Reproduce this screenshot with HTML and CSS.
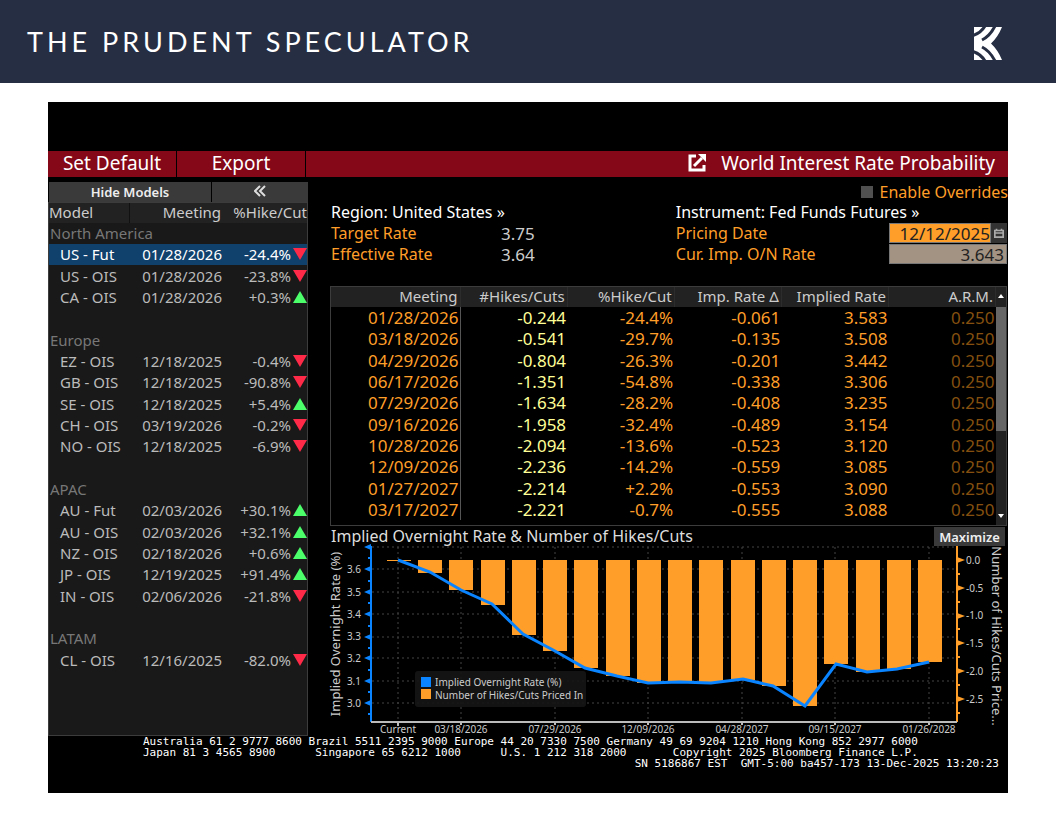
FILE: index.html
```html
<!DOCTYPE html>
<html lang="en">
<head>
  <meta charset="UTF-8" />
  <meta name="viewport" content="width=device-width, initial-scale=1.0"/>
  <title>The Prudent Speculator - World Interest Rate Probability</title>
  <link rel="stylesheet" href="styles.css">
</head>
<body>
  <header class="site-header">
    <h1>THE PRUDENT SPECULATOR</h1>
    <svg class="logo" viewBox="0 0 28 33" aria-hidden="true">
      <path class="logo-shape" d="M0 0H28Q24 10 17 16.500Q24 23 28 33H0Z"/>
      <path class="logo-cut" d="M11 -1Q7 6 -1 8.500M21 -1Q16 9 8 13M11 34Q7 27 -1 24.500M21 34Q16 24 8 20"/>
    </svg>
  </header>

  <main class="terminal">
    <nav class="menu-bar">
      <button type="button" class="menu-btn">Set Default</button>
      <button type="button" class="menu-btn">Export</button>
      <div class="menu-title">
        <svg class="popout" viewBox="0 0 18 18" aria-hidden="true">
          <path d="M8 2H2V16H16V11" fill="none" stroke="#fff" stroke-width="3"/>
          <path d="M6 12L14 4" stroke="#fff" stroke-width="3"/>
          <path d="M10 0H18V8Z" fill="#fff"/>
        </svg>
        <h2>World Interest Rate Probability</h2>
      </div>
    </nav>

    <div class="content">
      <aside class="models">
        <div class="models-bar">
          <button type="button" class="gray-btn">Hide Models</button>
          <button type="button" class="gray-btn" aria-label="Collapse">
            <svg class="chevrons" viewBox="0 0 12 12" aria-hidden="true">
              <path d="M6 1L1 6L6 11M11 1L6 6L11 11" fill="none" stroke="#ddd" stroke-width="2"/>
            </svg>
          </button>
        </div>
        <div class="models-panel">
          <table class="models-table">
            <thead>
              <tr><th class="col-model">Model</th><th class="col-date">Meeting</th><th class="col-cut">%Hike/Cut</th></tr>
            </thead>
            <tbody>
              <tr class="group"><td colspan="3">North America</td></tr>
              <tr class="selected"><td>US - Fut</td><td>01/28/2026</td><td>-24.4%<i class="down"></i></td></tr>
              <tr><td>US - OIS</td><td>01/28/2026</td><td>-23.8%<i class="down"></i></td></tr>
              <tr><td>CA - OIS</td><td>01/28/2026</td><td>+0.3%<i class="up"></i></td></tr>
              <tr class="group"><td colspan="3"></td></tr>
              <tr class="group"><td colspan="3">Europe</td></tr>
              <tr><td>EZ - OIS</td><td>12/18/2025</td><td>-0.4%<i class="down"></i></td></tr>
              <tr><td>GB - OIS</td><td>12/18/2025</td><td>-90.8%<i class="down"></i></td></tr>
              <tr><td>SE - OIS</td><td>12/18/2025</td><td>+5.4%<i class="up"></i></td></tr>
              <tr><td>CH - OIS</td><td>03/19/2026</td><td>-0.2%<i class="down"></i></td></tr>
              <tr><td>NO - OIS</td><td>12/18/2025</td><td>-6.9%<i class="down"></i></td></tr>
              <tr class="group"><td colspan="3"></td></tr>
              <tr class="group"><td colspan="3">APAC</td></tr>
              <tr><td>AU - Fut</td><td>02/03/2026</td><td>+30.1%<i class="up"></i></td></tr>
              <tr><td>AU - OIS</td><td>02/03/2026</td><td>+32.1%<i class="up"></i></td></tr>
              <tr><td>NZ - OIS</td><td>02/18/2026</td><td>+0.6%<i class="up"></i></td></tr>
              <tr><td>JP - OIS</td><td>12/19/2025</td><td>+91.4%<i class="up"></i></td></tr>
              <tr><td>IN - OIS</td><td>02/06/2026</td><td>-21.8%<i class="down"></i></td></tr>
              <tr class="group"><td colspan="3"></td></tr>
              <tr class="group"><td colspan="3">LATAM</td></tr>
              <tr><td>CL - OIS</td><td>12/16/2025</td><td>-82.0%<i class="down"></i></td></tr>
            </tbody>
          </table>
        </div>
      </aside>

      <section class="detail">
        <div class="overrides">
          <input type="checkbox" id="overrides" />
          <label for="overrides">Enable Overrides</label>
        </div>

        <div class="info">
          <div class="info-region">
            <a href="#" class="info-link">Region: United States »</a>
            <span>Target Rate</span><span class="info-value">3.75</span>
            <span>Effective Rate</span><span class="info-value">3.64</span>
          </div>
          <div class="info-instrument">
            <a href="#" class="info-link">Instrument: Fed Funds Futures »</a>
            <label for="pricing_date">Pricing Date</label>
            <div class="date-field">
              <input type="text" id="pricing_date" value="12/12/2025" />
              <button type="button" class="calendar-btn" aria-label="Open calendar">
                <svg viewBox="0 0 12 12" aria-hidden="true">
                  <path d="M1 3H11V11H1ZM1 6H11M3 1V4M9 1V4" fill="none" stroke="#aaa" stroke-width="2"/>
                </svg>
              </button>
            </div>
            <label for="on_rate">Cur. Imp. O/N Rate</label>
            <input type="text" id="on_rate" value="3.643" readonly />
          </div>
        </div>

        <div class="rates">
          <table class="rates-table">
            <thead>
              <tr>
                <th class="col-meeting">Meeting</th><th>#Hikes/Cuts</th><th>%Hike/Cut</th><th>Imp. Rate Δ</th><th>Implied Rate</th><th>A.R.M.</th>
              </tr>
            </thead>
            <tbody>
              <tr><td>01/28/2026</td><td>-0.244</td><td>-24.4%</td><td>-0.061</td><td>3.583</td><td>0.250</td></tr>
              <tr><td>03/18/2026</td><td>-0.541</td><td>-29.7%</td><td>-0.135</td><td>3.508</td><td>0.250</td></tr>
              <tr><td>04/29/2026</td><td>-0.804</td><td>-26.3%</td><td>-0.201</td><td>3.442</td><td>0.250</td></tr>
              <tr><td>06/17/2026</td><td>-1.351</td><td>-54.8%</td><td>-0.338</td><td>3.306</td><td>0.250</td></tr>
              <tr><td>07/29/2026</td><td>-1.634</td><td>-28.2%</td><td>-0.408</td><td>3.235</td><td>0.250</td></tr>
              <tr><td>09/16/2026</td><td>-1.958</td><td>-32.4%</td><td>-0.489</td><td>3.154</td><td>0.250</td></tr>
              <tr><td>10/28/2026</td><td>-2.094</td><td>-13.6%</td><td>-0.523</td><td>3.120</td><td>0.250</td></tr>
              <tr><td>12/09/2026</td><td>-2.236</td><td>-14.2%</td><td>-0.559</td><td>3.085</td><td>0.250</td></tr>
              <tr><td>01/27/2027</td><td>-2.214</td><td>+2.2%</td><td>-0.553</td><td>3.090</td><td>0.250</td></tr>
              <tr><td>03/17/2027</td><td>-2.221</td><td>-0.7%</td><td>-0.555</td><td>3.088</td><td>0.250</td></tr>
            </tbody>
          </table>
          <div class="scrollbar">
            <span class="arrow-up"></span>
            <span class="track"><span class="thumb"></span></span>
            <span class="arrow-down"></span>
          </div>
        </div>

        <div class="chart-head">
          <h3>Implied Overnight Rate &amp; Number of Hikes/Cuts</h3>
          <button type="button" class="gray-btn">Maximize</button>
        </div>

        <svg class="chart" viewBox="0 0 678 190" role="img" aria-label="Implied overnight rate and number of hikes/cuts">
          <!-- grid -->
          <path class="grid" d="M42 1H626M42 23H626M42 46H626M42 68H626M42 91H626M42 112H626M42 135H626M42 157H626"/>
          <path class="grid" d="M68 1V176M131 1V176M225 1V176M318 1V176M412 1V176M505 1V176M599 1V176"/>

          <!-- hikes/cuts priced in -->
          <g class="bars">
            <rect x="57" y="14" width="24" height="1"/>
            <rect x="88" y="14" width="24" height="13"/>
            <rect x="119" y="14" width="24" height="30"/>
            <rect x="151" y="14" width="24" height="45"/>
            <rect x="182" y="14" width="24" height="75"/>
            <rect x="213" y="14" width="24" height="91"/>
            <rect x="244" y="14" width="24" height="108"/>
            <rect x="276" y="14" width="24" height="116"/>
            <rect x="307" y="14" width="24" height="123"/>
            <rect x="338" y="14" width="24" height="122"/>
            <rect x="369" y="14" width="24" height="122"/>
            <rect x="401" y="14" width="24" height="120"/>
            <rect x="432" y="14" width="24" height="126"/>
            <rect x="463" y="14" width="24" height="146"/>
            <rect x="494" y="14" width="24" height="104"/>
            <rect x="526" y="14" width="24" height="112"/>
            <rect x="557" y="14" width="24" height="109"/>
            <rect x="588" y="14" width="24" height="102"/>
          </g>

          <!-- legend -->
          <rect class="legend-box" x="85" y="125" width="171" height="36" rx="3"/>
          <rect class="legend-rate" x="91" y="131" width="10" height="10"/>
          <rect class="legend-cuts" x="91" y="143" width="10" height="10"/>
          <text class="legend-text" x="105" y="140">Implied Overnight Rate (%)</text>
          <text class="legend-text" x="105" y="153">Number of Hikes/Cuts Priced In</text>

          <polyline class="rate-line" points="68,14 100,26 131,44 162,58 193,88 225,105 255,122 287,130 318,137 350,136 381,137 413,133 443,140 475,160 506,118 537,126 567,123 599,116"/>

          <!-- axes -->
          <path class="axis-left" d="M41 0V176M38 12H41M38 35H41M38 57H41M38 80H41M38 102H41M38 124H41M38 146H41M38 168H41"/>
          <path class="ticks-left" d="M41 -2V4L34 1ZM41 20V26L34 23ZM41 43V49L34 46ZM41 65V71L34 68ZM41 88V94L34 91ZM41 109V115L34 112ZM41 132V138L34 135ZM41 154V160L34 157Z"/>
          <path class="axis-right" d="M627 0V176M627 28H630M627 56H630M627 83H630M627 111H630M627 139H630M627 167H630"/>
          <path class="ticks-right" d="M627 11V17L635 14ZM627 39V45L635 42ZM627 67V73L635 70ZM627 94V100L635 97ZM627 122V128L635 125ZM627 150V156L635 153Z"/>
          <path class="axis-bottom" d="M41 176H627M68 176V180M131 176V179M225 176V179M318 176V179M412 176V179M505 176V179M599 176V179"/>

          <g class="labels labels-left">
            <text x="31" y="27">3.6</text>
            <text x="31" y="50">3.5</text>
            <text x="31" y="72">3.4</text>
            <text x="31" y="94">3.3</text>
            <text x="31" y="116">3.2</text>
            <text x="31" y="139">3.1</text>
            <text x="31" y="161">3.0</text>
          </g>
          <g class="labels">
            <text x="636" y="18">0.0</text>
            <text x="636" y="46">-0.5</text>
            <text x="636" y="73">-1.0</text>
            <text x="636" y="101">-1.5</text>
            <text x="636" y="129">-2.0</text>
            <text x="636" y="157">-2.5</text>
          </g>
          <g class="labels labels-bottom">
            <text x="68" y="187">Current</text>
            <text x="131" y="187">03/18/2026</text>
            <text x="225" y="187">07/29/2026</text>
            <text x="318" y="187">12/09/2026</text>
            <text x="412" y="187">04/28/2027</text>
            <text x="505" y="187">09/15/2027</text>
            <text x="599" y="187">01/26/2028</text>
          </g>
          <text class="axis-title" transform="translate(10 88) rotate(-90)">Implied Overnight Rate (%)</text>
          <text class="axis-title" transform="translate(662 90) rotate(90)">Number of Hikes/Cuts Price...</text>
        </svg>
      </section>
    </div>

    <footer class="terminal-footer">
      <pre>Australia 61 2 9777 8600 Brazil 5511 2395 9000 Europe 44 20 7330 7500 Germany 49 69 9204 1210 Hong Kong 852 2977 6000
Japan 81 3 4565 8900      Singapore 65 6212 1000      U.S. 1 212 318 2000       Copyright 2025 Bloomberg Finance L.P.</pre>
      <pre class="session">SN 5186867 EST  GMT-5:00 ba457-173 13-Dec-2025 13:20:23</pre>
    </footer>
  </main>
</body>
</html>
```

FILE: styles.css
```css
:root {
  --navy: #262e43;
  --red: #840818;
  --orange: #ff9e28;
  --blue: #0a84ff;
  --panel: #191919;
  --line: #3c3c3c;
}

* {
  margin: 0;
  padding: 0;
  box-sizing: border-box;
}

body {
  background-color: #fff;
  color: #fff;
  font-family: "Noto Sans", sans-serif;
  font-size: 16px;
}

button, input {
  font: inherit;
  color: inherit;
  border: none;
}

table {
  border-collapse: collapse;
  table-layout: fixed;
  width: 100%;
}

th {
  font-weight: 400;
}

.site-header {
  display: flex;
  align-items: center;
  justify-content: space-between;
  height: 83px;
  padding: 0 54px 0 27px;
  background-color: var(--navy);
}

h1 {
  font-family: Lato, sans-serif;
  font-size: 27px;
  font-weight: 400;
  letter-spacing: 4px;
}

.logo {
  width: 28px;
  height: 33px;
  margin-top: 4px;
}

.logo-shape {
  fill: #fff;
}

.logo-cut {
  fill: none;
  stroke: var(--navy);
  stroke-width: 3;
}

.terminal {
  margin: 19px 48px 23px;
  padding: 49px 0 24px;
  background-color: #000;
}

/* Menu bar */
.menu-bar {
  display: flex;
  height: 26px;
  gap: 1px;
}

.menu-btn, .menu-title {
  background-color: var(--red);
  font-size: 19px;
  line-height: 23px;
}

.menu-btn {
  width: 128px;
  padding-bottom: 2px;
}

.menu-title {
  flex: 1;
  display: flex;
  align-items: center;
  justify-content: flex-end;
  gap: 15px;
  padding: 0 13px 2px 0;
}

h2 {
  font-size: 19px;
  font-weight: 400;
}

.popout {
  width: 18px;
  height: 18px;
}

.content {
  display: flex;
  padding-top: 5px;
}

/* Models list */
.models {
  display: flex;
  flex-direction: column;
  width: 260px;
}

.models-bar {
  display: flex;
  gap: 1px;
  height: 20px;
  padding-left: 1px;
}

.gray-btn {
  background-color: #3a3a3a;
  color: #eee;
  font-size: 13px;
  font-weight: 600;
  line-height: 18px;
}

.models-bar .gray-btn:first-child {
  width: 162px;
}

.models-bar .gray-btn:last-child {
  flex: 1;
}

.chevrons {
  width: 12px;
  height: 12px;
}

.models-panel {
  flex: 1;
  border: 1px solid var(--line);
  background-color: var(--panel);
}

.models-table {
  color: #bbb;
  font-size: 15px;
  line-height: 18px;
}

.models-table th {
  height: 20px;
  padding-bottom: 2px;
  background-color: #222;
  color: #ccc;
  text-align: right;
}

.models-table .col-model {
  width: 80px;
  border-right: 1px solid #111;
  text-align: left;
}

.models-table .col-date {
  width: 95px;
  padding-right: 3px;
}

.models-table td {
  height: 21px;
  padding-bottom: 1px;
  text-align: right;
  white-space: nowrap;
}

.models-table tr:nth-child(3n) td {
  height: 22px;
}

.models-table td:first-child {
  padding-left: 11px;
  text-align: left;
}

.models-table td:nth-child(2) {
  padding-right: 2px;
}

.models-table .group td {
  padding-left: 1px;
  color: #777;
}

.models-table .selected td {
  background-color: #10406c;
  color: #fff;
}

.up, .down {
  display: inline-block;
  margin-left: 2px;
  border-left: 7px solid transparent;
  border-right: 7px solid transparent;
}

.up {
  border-bottom: 12px solid #4cff6a;
}

.down {
  border-top: 12px solid #ff2a48;
}

/* Detail area */
.detail {
  flex: 1;
  min-width: 0;
  padding-left: 22px;
}

.overrides {
  display: flex;
  align-items: center;
  justify-content: flex-end;
  gap: 7px;
  height: 20px;
  color: var(--orange);
}

.overrides input {
  appearance: none;
  width: 12px;
  height: 12px;
  background-color: #505050;
}

.info {
  display: flex;
  height: 84px;
  color: var(--orange);
  line-height: 21px;
}

.info-region, .info-instrument {
  display: grid;
  grid-template-rows: repeat(3, 21px);
  align-content: start;
}

.info-region {
  flex: 0 0 51%;
  grid-template-columns: 170px 1fr;
  padding-left: 1px;
}

.info-instrument {
  flex: 1;
  grid-template-columns: 1fr 118px;
  padding-right: 1px;
}

.info-link {
  grid-column: 1 / -1;
  color: #fff;
  text-decoration: none;
}

.info-value {
  color: #ccc;
  font-size: 17px;
}

.date-field {
  display: flex;
  height: 20px;
  background-color: #333;
}

.info-instrument input {
  width: 100%;
  height: 20px;
  border: 1px solid #777;
  font-size: 17px;
  text-align: right;
  color: #222;
}

.date-field input {
  flex: 1;
  min-width: 0;
  background-color: var(--orange);
}

.calendar-btn {
  width: 16px;
  background-color: #333;
  line-height: 0;
}

.calendar-btn svg {
  width: 10px;
  height: 10px;
}

#on_rate {
  padding-right: 2px;
  background-color: #a39382;
}

.rates {
  display: flex;
  height: 240px;
  margin-right: 1px;
  border: 1px solid var(--line);
  overflow: hidden;
}

.rates-table {
  width: calc(100% - 10px);
  align-self: flex-start;
  color: var(--orange);
  font-size: 17px;
  text-align: right;
}

.rates-table th {
  height: 20px;
  padding: 0 2px 2px 0;
  border-right: 1px solid #2c2c2c;
  background-color: #222;
  color: #ccc;
  font-size: 15px;
  line-height: 18px;
}

.rates-table .col-meeting {
  width: 129px;
}

.rates-table td {
  height: 21px;
  padding-right: 1px;
  line-height: 21px;
}

.rates-table tr:nth-child(3n) td {
  height: 22px;
}

.rates-table td:first-child {
  border-right: 1px solid #555;
}

.rates-table td:nth-child(2) {
  color: #ffff96;
}

.rates-table td:last-child {
  color: #85500f;
}

.scrollbar {
  display: flex;
  flex-direction: column;
  align-items: center;
  justify-content: space-between;
  width: 10px;
  background-color: #222;
}

.track {
  flex: 1;
  width: 100%;
}

.thumb {
  display: block;
  height: 62%;
  background-color: #666;
}

.arrow-up, .arrow-down {
  border-left: 3px solid transparent;
  border-right: 3px solid transparent;
}

.arrow-up {
  margin: 7px 0 9px;
  border-bottom: 4px solid #fff;
}

.arrow-down {
  margin: 7px 0;
  border-top: 4px solid #fff;
}

/* Chart */
.chart-head {
  display: flex;
  justify-content: space-between;
  height: 20px;
  padding: 1px 3px 0 1px;
}

h3 {
  color: #ddd;
  font-size: 16px;
  font-weight: 400;
  line-height: 18px;
}

.chart-head .gray-btn {
  width: 71px;
}

.chart {
  display: block;
  width: 100%;
  overflow: visible;
}

.grid {
  fill: none;
  stroke: #444;
  stroke-dasharray: 2 3;
}

.bars, .legend-cuts, .ticks-right {
  fill: var(--orange);
}

.legend-rate, .ticks-left {
  fill: var(--blue);
}

.legend-box {
  fill: #151515;
  fill-opacity: 0.9;
}

.rate-line {
  fill: none;
  stroke: var(--blue);
  stroke-width: 3;
}

.axis-left {
  stroke: var(--blue);
  stroke-width: 2;
}

.axis-right {
  stroke: var(--orange);
  stroke-width: 2;
}

.axis-bottom {
  stroke: #bbb;
  stroke-width: 2;
}

.labels, .legend-text {
  fill: #ccc;
  font-size: 10px;
}

.labels-left {
  text-anchor: end;
}

.labels-bottom {
  text-anchor: middle;
}

.axis-title {
  fill: #ccc;
  font-size: 13px;
  text-anchor: middle;
}

.terminal-footer {
  padding: 0 9px 0 95px;
}

.terminal-footer pre {
  font-family: "DejaVu Sans Mono", monospace;
  font-size: 11px;
  line-height: 11px;
}

.terminal-footer .session {
  text-align: right;
}
```
